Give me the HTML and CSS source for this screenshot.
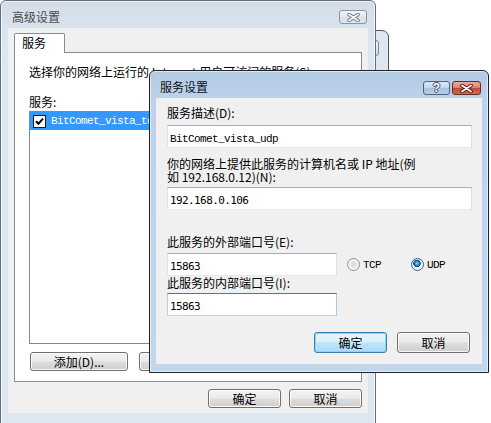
FILE: index.html
```html
<!DOCTYPE html>
<html lang="zh-CN">
<head>
<meta charset="utf-8">
<title>服务设置</title>
<link rel="stylesheet" href="styles.css">
</head>
<body>
<div class="behind"><span class="behind-btn"></span></div>

<div class="win back">
  <div class="titlebar">
    <span class="title">高级设置</span>
    <span class="tb-btn close">
      <svg width="13" height="9" viewBox="0 0 13 9"><path d="M2 1.5 L11 7.5 M11 1.5 L2 7.5" stroke="#6d7885" stroke-width="3.6" stroke-linecap="round"/><path d="M2 1.5 L11 7.5 M11 1.5 L2 7.5" stroke="#f3f5f8" stroke-width="1.8" stroke-linecap="round"/></svg>
    </span>
  </div>
  <div class="client">
    <div class="tabs"><div class="tab">服务</div></div>
    <div class="tabpage">
      <p class="line">选择你的网络上运行的 Internet 用户可访问的服务(S):</p>
      <p class="line svc">服务:</p>
      <div class="listbox">
        <div class="row sel">
          <svg class="chk" width="13" height="13" viewBox="0 0 13 13"><rect x="0.5" y="0.5" width="12" height="12" fill="#fff" stroke="#1c1c1c"/><path d="M3 6.3 L5.4 8.8 L10 3.6" fill="none" stroke="#000" stroke-width="2"/></svg>
          <span class="m">BitComet_vista_tcp</span>
        </div>
      </div>
      <div class="tp-buttons">
        <button class="btn wide">添加(D)...</button>
        <button class="btn wide">编辑(T)...</button>
        <button class="btn wide">删除(L)</button>
      </div>
    </div>
    <div class="dlg-buttons">
      <button class="btn">确定</button>
      <button class="btn">取消</button>
    </div>
  </div>
</div>

<div class="win front">
  <div class="titlebar">
    <span class="title">服务设置</span>
    <span class="tb-btn help">?</span>
    <span class="tb-btn close red">
      <svg width="13" height="9" viewBox="0 0 13 9"><path d="M2 1.5 L11 7.5 M11 1.5 L2 7.5" stroke="#3f1612" stroke-width="3.6" stroke-linecap="round"/><path d="M2 1.5 L11 7.5 M11 1.5 L2 7.5" stroke="#ffffff" stroke-width="1.8" stroke-linecap="round"/></svg>
    </span>
  </div>
  <div class="client fclient">
    <div class="lbl">服务描述(D):</div>
    <div class="input full"><span class="m">BitComet_vista_udp</span></div>
    <div class="lbl two">你的网络上提供此服务的计算机名或 IP 地址(例<br>如 192.168.0.12)(N):</div>
    <div class="input full ip"><span class="n">192.168.0.106</span></div>
    <div class="lbl l3">此服务的外部端口号(E):</div>
    <div class="port-row">
      <div class="input port"><span class="n">15863</span></div>
      <span class="radio-opt"><span class="radio"></span><span class="m">TCP</span></span>
      <span class="radio-opt"><span class="radio on"></span><span class="m">UDP</span></span>
    </div>
    <div class="lbl l4">此服务的内部端口号(I):</div>
    <div class="input port focus"><span class="n">15863</span></div>
    <div class="dlg-buttons fbtns">
      <button class="btn big default">确定</button>
      <button class="btn big">取消</button>
    </div>
  </div>
</div>
</body>
</html>
```

FILE: styles.css
```css
* { box-sizing: border-box; }
html, body { margin: 0; padding: 0; }
body {
  width: 491px;
  height: 423px;
  overflow: hidden;
  position: relative;
  background: #ffffff;
  font: 12px/14px "Noto Sans CJK SC", sans-serif;
  color: #000;
}
p { margin: 0; }
button { font: inherit; color: inherit; padding: 0; margin: 0; cursor: default; }

.m { font: 11px "Liberation Mono", monospace; letter-spacing: -0.6px; }
.n { font: 11px "DejaVu Sans Mono", monospace; letter-spacing: -0.6px; }

/* window partly hidden behind */
.behind {
  position: absolute;
  left: 300px;
  top: 30px;
  width: 89px;
  height: 60px;
  border: 1px solid #4c535b;
  border-radius: 0 7px 0 0;
  background: linear-gradient(90deg, #d2dfec, #dfe8f2);
  display: flex;
  justify-content: flex-end;
  align-items: flex-start;
  padding: 9px 9px 0 0;
}
.behind-btn {
  width: 30px;
  height: 16px;
  border: 1px solid #7d8996;
  border-radius: 3px;
  background: linear-gradient(#eef2f6, #d6dee7);
}

/* windows */
.win {
  position: absolute;
  display: flex;
  flex-direction: column;
  border: 1px solid;
  border-radius: 6px 6px 0 0;
}
.titlebar {
  height: 27px;
  flex: none;
  display: flex;
  align-items: flex-start;
}
.title { margin-top: 9px; line-height: 14px; white-space: nowrap; }
.tb-btn {
  margin-top: 9px;
  height: 14px;
  border: 1px solid;
  border-radius: 3px;
  display: flex;
  align-items: center;
  justify-content: center;
}

/* back window */
.back {
  left: 0;
  top: 0;
  width: 376px;
  height: 440px;
  border-color: #66707b;
  background: linear-gradient(#d2dde9, #dce6f1 40px, #dde7f2);
  box-shadow: inset 0 0 0 1px rgba(255,255,255,0.6);
  padding: 0 7px;
}
.back .titlebar { padding: 0 1px 0 4px; }
.back .title { color: #4a4a4a; }
.back .close {
  margin-left: auto;
  width: 28px;
  border-color: #8995a2;
  background: linear-gradient(#f1f4f7, #e3e9ef 45%, #d5dde6 50%, #dfe6ee);
}
.back .client {
  width: 360px;
  height: 385px;
  flex: none;
  background: #f0f0f0;
  padding: 5px 6px 0 6px;
  display: flex;
  flex-direction: column;
}
.tabs { display: flex; height: 20px; }
.tab {
  position: relative;
  z-index: 1;
  width: 51px;
  height: 20px;
  border: 1px solid #898c95;
  border-bottom: none;
  border-radius: 2px 2px 0 0;
  background: #ffffff;
  padding: 2px 0 0 7px;
}
.tabpage {
  width: 348px;
  height: 330px;
  margin-top: -1px;
  border: 1px solid #898c95;
  background: #ffffff;
  padding: 12px 14px 0 14px;
}
.line { white-space: nowrap; }
.svc { margin-top: 16px; }
.listbox {
  margin-top: 2px;
  width: 319px;
  height: 233px;
  border: 1px solid #828790;
  background: #fff;
}
.row {
  height: 18px;
  display: flex;
  align-items: center;
  padding-left: 3px;
}
.row.sel { background: #3399ff; color: #fff; }
.row .chk { flex: none; }
.row .m { margin-left: 5px; }

.btn {
  height: 19px;
  width: 73px;
  border: 1px solid #707070;
  border-radius: 3px;
  background: linear-gradient(#f2f2f2, #ebebeb 48%, #dddddd 52%, #cfcfcf);
  box-shadow: inset 0 0 0 1px rgba(255,255,255,0.85);
  line-height: 16px;
  text-align: center;
  white-space: nowrap;
}
.btn.wide { width: 98px; }
.btn.big { height: 21px; line-height: 18px; }
.btn.default {
  border-color: #3c7fb1;
  background: linear-gradient(#e9f5fd, #d9effc 48%, #bde5fb 52%, #a9dbf6);
  box-shadow: inset 0 0 0 1px #7fdcf7;
}
.tp-buttons {
  margin-top: 8px;
  margin-left: 1px;
  display: flex;
  gap: 11px;
}
.dlg-buttons {
  margin-top: 7px;
  display: flex;
  justify-content: flex-end;
  gap: 8px;
}

/* front dialog */
.front {
  left: 149px;
  top: 70px;
  width: 340px;
  height: 303px;
  border-color: #222;
  background: linear-gradient(#b3cae3, #bcd2ea 27px, #c1d7ee);
  box-shadow: inset 0 0 0 1px rgba(255,255,255,0.55);
  padding: 0 6px 8px;
}
.front .titlebar { padding: 0 1px 0 4px; }
.front .title { color: #111; }
.help {
  margin-left: auto;
  margin-top: 10px;
  width: 27px;
  border-color: #4f6480;
  background: linear-gradient(#dbe7f4, #c6d8ed 45%, #a8c1df 50%, #b8cee7);
  color: #fff;
  font: bold 12px/12px "Liberation Sans", sans-serif;
  text-shadow: 1px 0 #3c5069, -1px 0 #3c5069, 0 1px #3c5069, 0 -1px #3c5069;
}
.close.red {
  margin-left: 2px;
  margin-top: 10px;
  width: 29px;
  border-color: #6a2a24;
  background: linear-gradient(#eaa999, #dc8b79 45%, #c44630 50%, #d36a52);
}
.fclient {
  width: 326px;
  height: 266px;
  flex: none;
  background: #f0f0f0;
  padding: 8px 10px 0 11px;
  display: flex;
  flex-direction: column;
  align-items: flex-start;
}
.lbl { line-height: 14px; white-space: nowrap; }
.lbl.two { margin-top: 9px; line-height: 13px; }
.lbl.l3 { margin-top: 25px; }
.input {
  height: 23px;
  border: 1px solid;
  border-color: #abadb3 #dbdfe6 #e3e9ef #e2e3ea;
  background: #fff;
  padding-left: 2px;
  line-height: 21px;
  margin-top: 5px;
}
.input.full { width: 305px; }
.input.ip { margin-top: 4px; }
.input.port { width: 170px; margin-top: 0; }
.input.focus {
  margin-top: 3px;
  border-color: #3d7bad #a4c9e3 #b7d9ed #b5cfe7;
}
.port-row {
  margin-top: 4px;
  display: flex;
  align-items: center;
}
.radio-opt {
  width: 64px;
  display: flex;
  align-items: center;
  gap: 3px;
}
.radio-opt:first-of-type { margin-left: 10px; }
.radio {
  width: 13px;
  height: 13px;
  border-radius: 50%;
  border: 1px solid #8e8f8f;
  background: radial-gradient(circle at 50% 50%, #d3d3d3 0, #e8e8e8 3px, #f6f6f6 5px);
  flex: none;
}
.radio.on {
  border-color: #2c628b;
  background: radial-gradient(circle at 45% 40%, #9ddcff 0, #2f86c6 2px, #0f4a80 3.5px, #e4eef7 4px, #f4f8fb 6px);
}
.fbtns {
  margin-top: 16px;
  align-self: stretch;
  gap: 10px;
  padding-right: 2px;
}
```
